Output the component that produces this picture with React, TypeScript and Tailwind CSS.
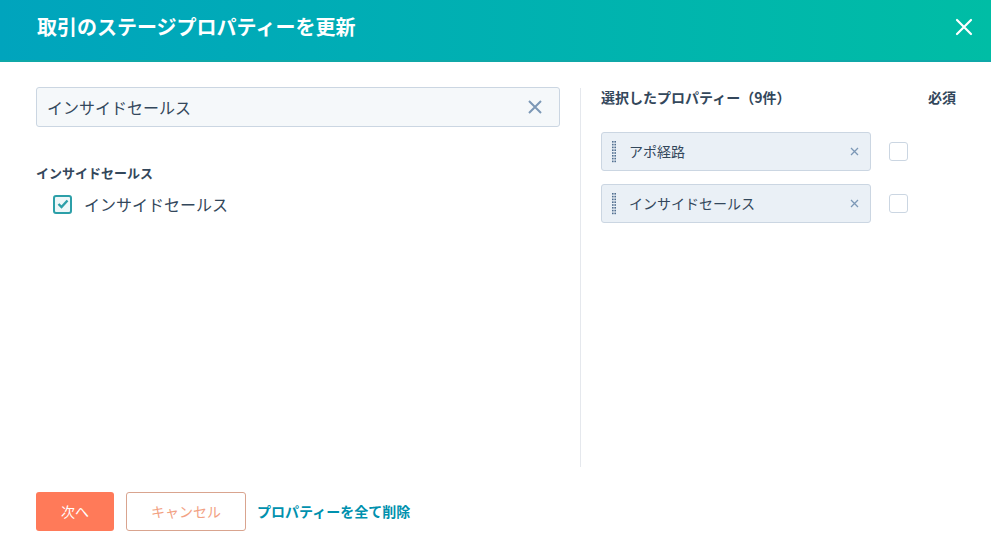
import React from 'react'

const font = { fontFamily: '"Noto Sans CJK JP", "Noto Sans", sans-serif' }

const DragHandle = () => (
  <svg width="4" height="22" viewBox="0 0 4 22" className="shrink-0">
    {[0, 1, 2, 3, 4, 5, 6, 7].map((i) => (
      <React.Fragment key={i}>
        <rect x="0" y={i * 2.8} width="1.6" height="1.6" fill="#516f90" />
        <rect x="2.4" y={i * 2.8} width="1.6" height="1.6" fill="#516f90" />
      </React.Fragment>
    ))}
  </svg>
)

const SelectedItem = ({ label }: { label: string }) => (
  <div className="flex items-center gap-[18px]">
    <div className="flex h-[39px] w-[270px] items-center rounded-[3px] border border-[#cbd6e2] bg-[#eaf0f6] pl-[10px] pr-[11px]">
      <DragHandle />
      <span className="ml-[13px] flex-1 text-[14px] text-[#33475b]">{label}</span>
      <svg width="9" height="9" viewBox="0 0 9 9">
        <path d="M1 1 L8 8 M8 1 L1 8" stroke="#7c98b6" strokeWidth="1.3" />
      </svg>
    </div>
    <div className="h-[19px] w-[19px] rounded-[3px] border border-[#cbd6e2] bg-white" />
  </div>
)

export default function App() {
  return (
    <div className="h-[552px] w-[991px] overflow-hidden bg-white" style={font}>
      <div className="flex h-[62px] items-center justify-between border-b-2 border-[#0fa8a8] bg-gradient-to-r from-[#00a4bd] to-[#00bda5] pl-[37px] pr-[17px]">
        <h1 className="pb-[6px] text-[20px] font-bold text-white">取引のステージプロパティーを更新</h1>
        <svg width="20" height="20" viewBox="0 0 20 20" className="mb-[6px]">
          <path d="M3 3 L17 17 M17 3 L3 17" stroke="white" strokeWidth="2.2" strokeLinecap="round" />
        </svg>
      </div>

      <div className="flex h-[405px] pt-[25px]">
        <div className="ml-[36px] w-[524px]">
          <div className="flex h-[40px] items-center rounded-[3px] border border-[#cbd6e2] bg-[#f5f8fa] pl-[10px] pr-[17px]">
            <span className="flex-1 text-[16px] text-[#33475b]">インサイドセールス</span>
            <svg width="14" height="14" viewBox="0 0 14 14">
              <path d="M1 1 L13 13 M13 1 L1 13" stroke="#7c98b6" strokeWidth="2" />
            </svg>
          </div>
          <div className="mt-[36px] text-[13px] font-bold leading-[20px] text-[#33475b]">インサイドセールス</div>
          <div className="mt-[9px] flex items-center gap-[12px] pl-[17px]">
            <div className="flex h-[19px] w-[19px] items-center justify-center rounded-[3px] border-2 border-[#2c9fa8] bg-[#eef7f8]">
              <svg width="12" height="10" viewBox="0 0 12 10">
                <path d="M1.5 5 L4.5 8 L10.5 1.5" stroke="#2c9fa8" strokeWidth="2.4" fill="none" />
              </svg>
            </div>
            <span className="text-[16px] text-[#33475b]">インサイドセールス</span>
          </div>
        </div>

        <div className="ml-[20px] mt-[1px] w-px bg-[#e5e8ed]" />

        <div className="ml-[20px] w-[355px]">
          <div className="flex h-[20px] items-center justify-between">
            <span className="text-[14px] font-bold text-[#33475b]">選択したプロパティー（9件）</span>
            <span className="text-[14px] font-bold text-[#33475b]">必須</span>
          </div>
          <div className="mt-[25px] flex flex-col gap-[13px]">
            <SelectedItem label="アポ経路" />
            <SelectedItem label="インサイドセールス" />
          </div>
        </div>
      </div>

      <div className="flex items-center pl-[36px] pt-[25px]">
        <button className="h-[39px] w-[78px] rounded-[3px] bg-[#ff7a59] text-[14px] text-white">次へ</button>
        <button className="ml-[12px] h-[39px] w-[120px] rounded-[3px] border border-[#d9a48f] bg-white text-[14px] text-[#f2a183]">
          キャンセル
        </button>
        <span className="ml-[11px] text-[14px] font-bold text-[#0091ae]">プロパティーを全て削除</span>
      </div>
    </div>
  )
}
